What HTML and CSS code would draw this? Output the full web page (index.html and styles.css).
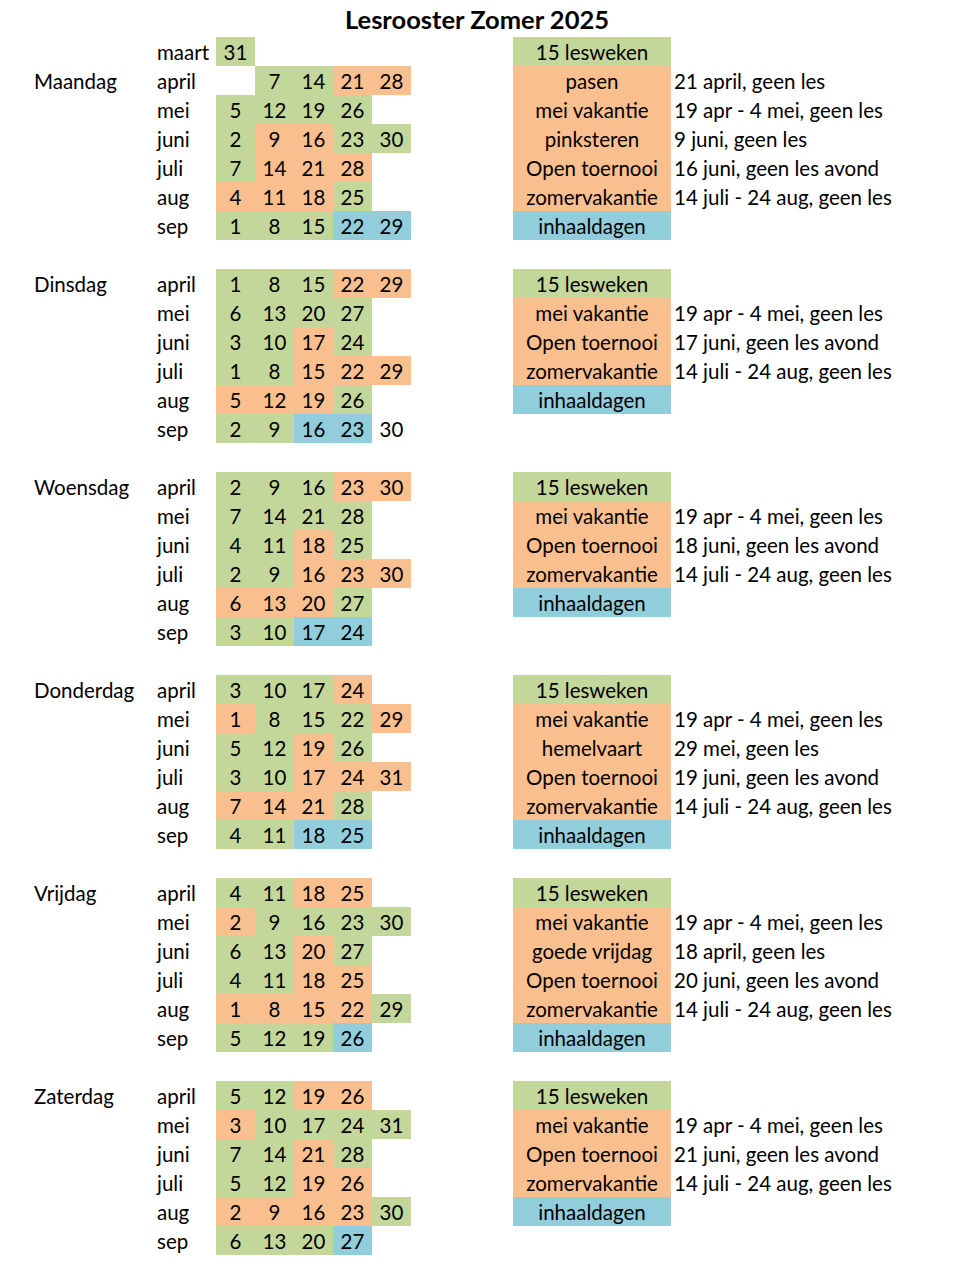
FILE: index.html
```html
<!DOCTYPE html>
<html lang="nl">
<head>
<meta charset="utf-8">
<title>Lesrooster Zomer 2025</title>
<link rel="stylesheet" href="styles.css">
</head>
<body>
<h1 class="title">Lesrooster Zomer 2025</h1>

<section class="day">
  <div class="row"><span class="dname"></span><span class="month">maart</span><span class="c g">31</span><span class="c"></span><span class="c"></span><span class="c"></span><span class="c"></span><span class="gap"></span><span class="leg g">15 lesweken</span><span class="desc"></span></div>
  <div class="row"><span class="dname">Maandag</span><span class="month">april</span><span class="c"></span><span class="c g">7</span><span class="c g">14</span><span class="c o">21</span><span class="c o">28</span><span class="gap"></span><span class="leg o">pasen</span><span class="desc">21 april, geen les</span></div>
  <div class="row"><span class="dname"></span><span class="month">mei</span><span class="c g">5</span><span class="c g">12</span><span class="c g">19</span><span class="c g">26</span><span class="c"></span><span class="gap"></span><span class="leg o">mei vakantie</span><span class="desc">19 apr - 4 mei, geen les</span></div>
  <div class="row"><span class="dname"></span><span class="month">juni</span><span class="c g">2</span><span class="c o">9</span><span class="c o">16</span><span class="c g">23</span><span class="c g">30</span><span class="gap"></span><span class="leg o">pinksteren</span><span class="desc">9 juni, geen les</span></div>
  <div class="row"><span class="dname"></span><span class="month">juli</span><span class="c g">7</span><span class="c o">14</span><span class="c o">21</span><span class="c o">28</span><span class="c"></span><span class="gap"></span><span class="leg o">Open toernooi</span><span class="desc">16 juni, geen les avond</span></div>
  <div class="row"><span class="dname"></span><span class="month">aug</span><span class="c o">4</span><span class="c o">11</span><span class="c o">18</span><span class="c g">25</span><span class="c"></span><span class="gap"></span><span class="leg o">zomervakantie</span><span class="desc">14 juli - 24 aug, geen les</span></div>
  <div class="row"><span class="dname"></span><span class="month">sep</span><span class="c g">1</span><span class="c g">8</span><span class="c g">15</span><span class="c b">22</span><span class="c b">29</span><span class="gap"></span><span class="leg b">inhaaldagen</span><span class="desc"></span></div>
</section>

<section class="day">
  <div class="row"><span class="dname">Dinsdag</span><span class="month">april</span><span class="c g">1</span><span class="c g">8</span><span class="c g">15</span><span class="c o">22</span><span class="c o">29</span><span class="gap"></span><span class="leg g">15 lesweken</span><span class="desc"></span></div>
  <div class="row"><span class="dname"></span><span class="month">mei</span><span class="c g">6</span><span class="c g">13</span><span class="c g">20</span><span class="c g">27</span><span class="c"></span><span class="gap"></span><span class="leg o">mei vakantie</span><span class="desc">19 apr - 4 mei, geen les</span></div>
  <div class="row"><span class="dname"></span><span class="month">juni</span><span class="c g">3</span><span class="c g">10</span><span class="c o">17</span><span class="c g">24</span><span class="c"></span><span class="gap"></span><span class="leg o">Open toernooi</span><span class="desc">17 juni, geen les avond</span></div>
  <div class="row"><span class="dname"></span><span class="month">juli</span><span class="c g">1</span><span class="c g">8</span><span class="c o">15</span><span class="c o">22</span><span class="c o">29</span><span class="gap"></span><span class="leg o">zomervakantie</span><span class="desc">14 juli - 24 aug, geen les</span></div>
  <div class="row"><span class="dname"></span><span class="month">aug</span><span class="c o">5</span><span class="c o">12</span><span class="c o">19</span><span class="c g">26</span><span class="c"></span><span class="gap"></span><span class="leg b">inhaaldagen</span><span class="desc"></span></div>
  <div class="row"><span class="dname"></span><span class="month">sep</span><span class="c g">2</span><span class="c g">9</span><span class="c b">16</span><span class="c b">23</span><span class="c">30</span><span class="gap"></span><span class="leg"></span><span class="desc"></span></div>
</section>

<section class="day">
  <div class="row"><span class="dname">Woensdag</span><span class="month">april</span><span class="c g">2</span><span class="c g">9</span><span class="c g">16</span><span class="c o">23</span><span class="c o">30</span><span class="gap"></span><span class="leg g">15 lesweken</span><span class="desc"></span></div>
  <div class="row"><span class="dname"></span><span class="month">mei</span><span class="c g">7</span><span class="c g">14</span><span class="c g">21</span><span class="c g">28</span><span class="c"></span><span class="gap"></span><span class="leg o">mei vakantie</span><span class="desc">19 apr - 4 mei, geen les</span></div>
  <div class="row"><span class="dname"></span><span class="month">juni</span><span class="c g">4</span><span class="c g">11</span><span class="c o">18</span><span class="c g">25</span><span class="c"></span><span class="gap"></span><span class="leg o">Open toernooi</span><span class="desc">18 juni, geen les avond</span></div>
  <div class="row"><span class="dname"></span><span class="month">juli</span><span class="c g">2</span><span class="c g">9</span><span class="c o">16</span><span class="c o">23</span><span class="c o">30</span><span class="gap"></span><span class="leg o">zomervakantie</span><span class="desc">14 juli - 24 aug, geen les</span></div>
  <div class="row"><span class="dname"></span><span class="month">aug</span><span class="c o">6</span><span class="c o">13</span><span class="c o">20</span><span class="c g">27</span><span class="c"></span><span class="gap"></span><span class="leg b">inhaaldagen</span><span class="desc"></span></div>
  <div class="row"><span class="dname"></span><span class="month">sep</span><span class="c g">3</span><span class="c g">10</span><span class="c b">17</span><span class="c b">24</span><span class="c"></span><span class="gap"></span><span class="leg"></span><span class="desc"></span></div>
</section>

<section class="day">
  <div class="row"><span class="dname">Donderdag</span><span class="month">april</span><span class="c g">3</span><span class="c g">10</span><span class="c g">17</span><span class="c o">24</span><span class="c"></span><span class="gap"></span><span class="leg g">15 lesweken</span><span class="desc"></span></div>
  <div class="row"><span class="dname"></span><span class="month">mei</span><span class="c o">1</span><span class="c g">8</span><span class="c g">15</span><span class="c g">22</span><span class="c o">29</span><span class="gap"></span><span class="leg o">mei vakantie</span><span class="desc">19 apr - 4 mei, geen les</span></div>
  <div class="row"><span class="dname"></span><span class="month">juni</span><span class="c g">5</span><span class="c g">12</span><span class="c o">19</span><span class="c g">26</span><span class="c"></span><span class="gap"></span><span class="leg o">hemelvaart</span><span class="desc">29 mei, geen les</span></div>
  <div class="row"><span class="dname"></span><span class="month">juli</span><span class="c g">3</span><span class="c g">10</span><span class="c o">17</span><span class="c o">24</span><span class="c o">31</span><span class="gap"></span><span class="leg o">Open toernooi</span><span class="desc">19 juni, geen les avond</span></div>
  <div class="row"><span class="dname"></span><span class="month">aug</span><span class="c o">7</span><span class="c o">14</span><span class="c o">21</span><span class="c g">28</span><span class="c"></span><span class="gap"></span><span class="leg o">zomervakantie</span><span class="desc">14 juli - 24 aug, geen les</span></div>
  <div class="row"><span class="dname"></span><span class="month">sep</span><span class="c g">4</span><span class="c g">11</span><span class="c b">18</span><span class="c b">25</span><span class="c"></span><span class="gap"></span><span class="leg b">inhaaldagen</span><span class="desc"></span></div>
</section>

<section class="day">
  <div class="row"><span class="dname">Vrijdag</span><span class="month">april</span><span class="c g">4</span><span class="c g">11</span><span class="c o">18</span><span class="c o">25</span><span class="c"></span><span class="gap"></span><span class="leg g">15 lesweken</span><span class="desc"></span></div>
  <div class="row"><span class="dname"></span><span class="month">mei</span><span class="c o">2</span><span class="c g">9</span><span class="c g">16</span><span class="c g">23</span><span class="c g">30</span><span class="gap"></span><span class="leg o">mei vakantie</span><span class="desc">19 apr - 4 mei, geen les</span></div>
  <div class="row"><span class="dname"></span><span class="month">juni</span><span class="c g">6</span><span class="c g">13</span><span class="c o">20</span><span class="c g">27</span><span class="c"></span><span class="gap"></span><span class="leg o">goede vrijdag</span><span class="desc">18 april, geen les</span></div>
  <div class="row"><span class="dname"></span><span class="month">juli</span><span class="c g">4</span><span class="c g">11</span><span class="c o">18</span><span class="c o">25</span><span class="c"></span><span class="gap"></span><span class="leg o">Open toernooi</span><span class="desc">20 juni, geen les avond</span></div>
  <div class="row"><span class="dname"></span><span class="month">aug</span><span class="c o">1</span><span class="c o">8</span><span class="c o">15</span><span class="c o">22</span><span class="c g">29</span><span class="gap"></span><span class="leg o">zomervakantie</span><span class="desc">14 juli - 24 aug, geen les</span></div>
  <div class="row"><span class="dname"></span><span class="month">sep</span><span class="c g">5</span><span class="c g">12</span><span class="c g">19</span><span class="c b">26</span><span class="c"></span><span class="gap"></span><span class="leg b">inhaaldagen</span><span class="desc"></span></div>
</section>

<section class="day">
  <div class="row"><span class="dname">Zaterdag</span><span class="month">april</span><span class="c g">5</span><span class="c g">12</span><span class="c o">19</span><span class="c o">26</span><span class="c"></span><span class="gap"></span><span class="leg g">15 lesweken</span><span class="desc"></span></div>
  <div class="row"><span class="dname"></span><span class="month">mei</span><span class="c o">3</span><span class="c g">10</span><span class="c g">17</span><span class="c g">24</span><span class="c g">31</span><span class="gap"></span><span class="leg o">mei vakantie</span><span class="desc">19 apr - 4 mei, geen les</span></div>
  <div class="row"><span class="dname"></span><span class="month">juni</span><span class="c g">7</span><span class="c g">14</span><span class="c o">21</span><span class="c g">28</span><span class="c"></span><span class="gap"></span><span class="leg o">Open toernooi</span><span class="desc">21 juni, geen les avond</span></div>
  <div class="row"><span class="dname"></span><span class="month">juli</span><span class="c g">5</span><span class="c g">12</span><span class="c o">19</span><span class="c o">26</span><span class="c"></span><span class="gap"></span><span class="leg o">zomervakantie</span><span class="desc">14 juli - 24 aug, geen les</span></div>
  <div class="row"><span class="dname"></span><span class="month">aug</span><span class="c o">2</span><span class="c o">9</span><span class="c o">16</span><span class="c o">23</span><span class="c g">30</span><span class="gap"></span><span class="leg b">inhaaldagen</span><span class="desc"></span></div>
  <div class="row"><span class="dname"></span><span class="month">sep</span><span class="c g">6</span><span class="c g">13</span><span class="c g">20</span><span class="c b">27</span><span class="c"></span><span class="gap"></span><span class="leg"></span><span class="desc"></span></div>
</section>
</body>
</html>
```

FILE: styles.css
```css
html, body {
  margin: 0;
  padding: 0;
  background: #ffffff;
}
body {
  font-family: Lato, "Liberation Sans", sans-serif;
  font-size: 20.5px;
  color: #000000;
  width: 954px;
}
.title {
  margin: 0;
  height: 37px;
  line-height: 38px;
  font-size: 25.5px;
  font-weight: 700;
  text-align: center;
  overflow: hidden;
}
.day {
  display: flex;
  flex-direction: column;
  margin-bottom: 29px;
}
.row {
  display: flex;
  height: 29px;
  white-space: nowrap;
}
.row > span {
  box-sizing: border-box;
  height: 29px;
  padding-top: 2px;
  line-height: 27px;
}
.row > .dname {
  width: 153px;
  padding-left: 34px;
}
.row > .month {
  width: 63px;
  padding-left: 4px;
}
.c {
  width: 39px;
  text-align: center;
}
.gap {
  width: 102px;
}
.leg {
  width: 158px;
  text-align: center;
}
.row > .desc {
  padding-left: 3px;
}
.g { background: #c4d79b; }
.o { background: #fabf8f; }
.b { background: #92cddc; }
```
